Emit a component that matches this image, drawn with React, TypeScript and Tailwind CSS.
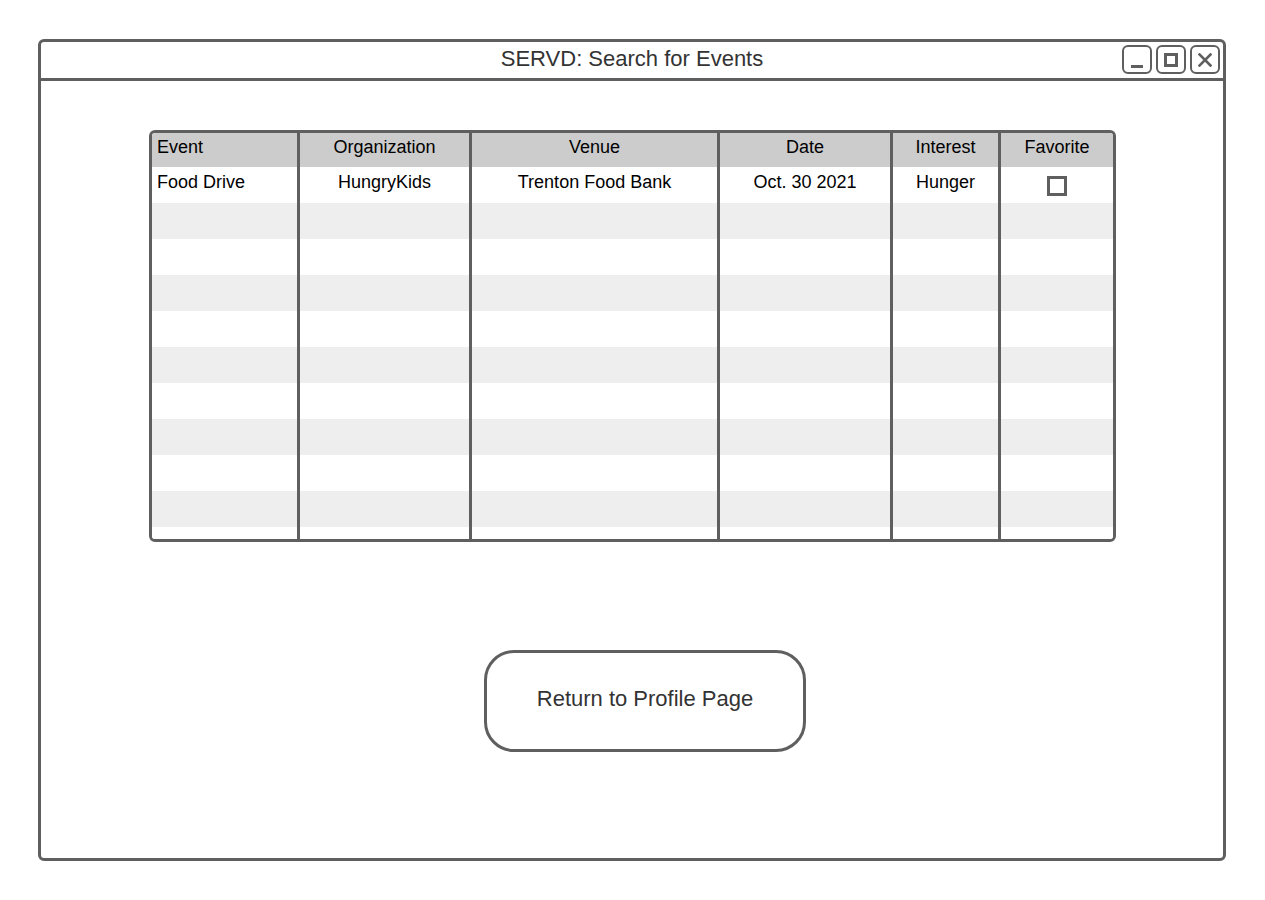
import React from "react";

const cols = "grid grid-cols-[148px_172px_248px_173px_108px_112px]";
const cell = "flex items-center border-r-[3px] border-[#5f5f5f] pb-[6px]";
const lastCell = "flex items-center pb-[6px]";

function Row({ bg, h = "h-[36px]", children }: { bg: string; h?: string; children?: React.ReactNode }) {
  const c = React.Children.toArray(children);
  return (
    <div className={`${cols} ${h} shrink-0 ${bg}`}>
      {[0, 1, 2, 3, 4].map((i) => (
        <div key={i} className={`${cell} ${i === 0 ? "justify-start pl-[5px]" : "justify-center"}`}>
          {c[i] ?? null}
        </div>
      ))}
      <div className={`${lastCell} justify-center`}>{c[5] ?? null}</div>
    </div>
  );
}

export default function App() {
  return (
    <div className="min-h-[900px] bg-white pt-[39px] pl-[38px]" style={{ fontFamily: '"Liberation Sans", Arial, sans-serif' }}>
      <div className="w-[1188px] h-[822px] border-[3px] border-[#5f5f5f] rounded-[6px] flex flex-col">
        {/* title bar */}
        <div className="grid grid-cols-[1fr_auto_1fr] h-[39px] shrink-0 border-b-[3px] border-[#5f5f5f]">
          <div />
          <div className="flex items-center justify-center pb-[7px] text-[22px] text-[#333333]">
            SERVD: Search for Events
          </div>
          <div className="flex justify-end items-start pt-[3px] pr-[3px] gap-[4px]">
            <div className="w-[30px] h-[29px] border-[2.5px] border-[#5f5f5f] rounded-[6px] flex items-end justify-center pb-[4px]">
              <div className="w-[12px] h-[3px] bg-[#5f5f5f]" />
            </div>
            <div className="w-[30px] h-[29px] border-[2.5px] border-[#5f5f5f] rounded-[6px] flex items-center justify-center">
              <div className="w-[14px] h-[14px] border-[3px] border-[#5f5f5f]" />
            </div>
            <div className="w-[30px] h-[29px] border-[2.5px] border-[#5f5f5f] rounded-[6px] flex items-center justify-center">
              <svg width="14" height="14" viewBox="0 0 14 14">
                <path d="M1.5 1.5 L12.5 12.5 M12.5 1.5 L1.5 12.5" stroke="#5f5f5f" strokeWidth="2.6" strokeLinecap="square" />
              </svg>
            </div>
          </div>
        </div>

        {/* table */}
        <div className="ml-[108px] mt-[49px] w-[967px] h-[412px] shrink-0 border-[3px] border-[#5f5f5f] rounded-[6px] overflow-hidden flex flex-col text-[18px] text-black">
          <div className={`${cols} h-[34px] shrink-0 bg-[#cccccc]`}>
            <div className={`${cell} pl-[5px]`}>Event</div>
            <div className={`${cell} justify-center`}>Organization</div>
            <div className={`${cell} justify-center`}>Venue</div>
            <div className={`${cell} justify-center`}>Date</div>
            <div className={`${cell} justify-center`}>Interest</div>
            <div className={`${lastCell} justify-center`}>Favorite</div>
          </div>
          <Row bg="bg-white">
            <span>Food Drive</span>
            <span>HungryKids</span>
            <span>Trenton Food Bank</span>
            <span>Oct. 30 2021</span>
            <span>Hunger</span>
            <span className="mt-[7px] block w-[20px] h-[20px] border-[3px] border-[#5f5f5f] bg-white" />
          </Row>
          <Row bg="bg-[#eeeeee]" />
          <Row bg="bg-white" />
          <Row bg="bg-[#eeeeee]" />
          <Row bg="bg-white" />
          <Row bg="bg-[#eeeeee]" />
          <Row bg="bg-white" />
          <Row bg="bg-[#eeeeee]" />
          <Row bg="bg-white" />
          <Row bg="bg-[#eeeeee]" />
          <Row bg="bg-white" h="h-[12px]" />
        </div>

        {/* button */}
        <div className="ml-[443px] mt-[108px] w-[322px] h-[102px] shrink-0 border-[3px] border-[#5f5f5f] rounded-[30px] flex items-center justify-center pb-[6px] text-[22px] text-[#333333]">
          Return to Profile Page
        </div>
      </div>
    </div>
  );
}
